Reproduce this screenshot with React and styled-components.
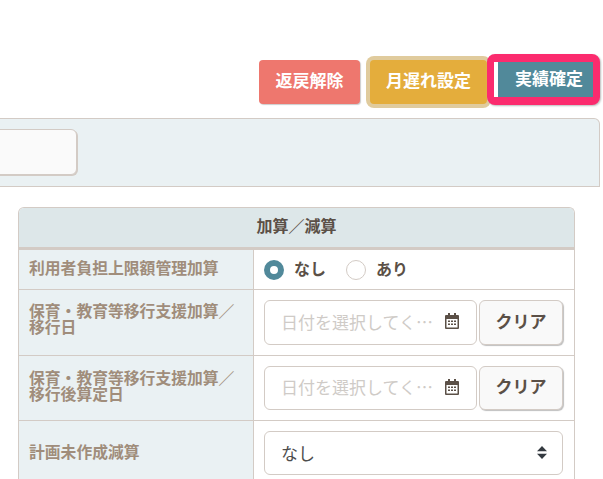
import React from "react";
import styled, { createGlobalStyle } from "styled-components";

const Global = createGlobalStyle`
  html, body { margin: 0; padding: 0; background: #fff; height: 100%; overflow: hidden; }
  body { font-family: "Noto Sans CJK JP", "Noto Sans", sans-serif; color: #5b5047; }
`;

const Page = styled.div`
  width: 603px;
  height: 479px;
  overflow: hidden;
  padding-top: 54px;
  box-sizing: border-box;
`;

const Toolbar = styled.div`
  display: flex;
  justify-content: flex-end;
  align-items: flex-start;
  height: 51px;
  padding-right: 3px;
`;

const ActionButton = styled.div`
  box-sizing: border-box;
  height: 44px;
  width: ${(p) => p.$w}px;
  margin-top: 6px;
  margin-right: ${(p) => p.$mr || 0}px;
  display: flex;
  align-items: center;
  justify-content: center;
  font-size: 17px;
  font-weight: 700;
  color: #fff;
  background: ${(p) => p.$bg};
  border-radius: 4px;
  box-shadow: ${(p) => p.$shadow || "1px 1px 1px #ccc"};
  padding-bottom: 5px;
`;

const ConfirmButton = styled.div`
  box-sizing: border-box;
  width: 113px;
  height: 51px;
  display: flex;
  align-items: center;
  justify-content: center;
  font-size: 17px;
  font-weight: 700;
  color: #fff;
  background: #51899a;
  border: solid #fb2b6e;
  border-width: 8px 7px;
  border-radius: 8px;
  padding-left: 11px;
  padding-bottom: 4px;
  box-shadow: inset 4px 0 0 #fff, 1px 1px 2px #bbb;
`;

const Panel = styled.div`
  margin-top: 13px;
  width: 600px;
  height: 69px;
  box-sizing: border-box;
  background: #eaf1f3;
  border-top: 1px solid #d3cbc5;
  border-bottom: 1px solid #d3cbc5;
  border-right: 1px solid #d3cbc5;
  border-radius: 0 6px 0 0;
  display: flex;
  align-items: flex-start;
`;

const PanelTab = styled.div`
  width: 78px;
  height: 46px;
  box-sizing: border-box;
  margin: 10px 0 0 -1px;
  background: #fafafa;
  border: 1px solid #d3cbc5;
  border-radius: 0 6px 6px 0;
  box-shadow: 1px 1px 0 #d3cbc5;
`;

const Table = styled.div`
  margin: 20px 0 0 18px;
  width: 557px;
  box-sizing: border-box;
  border: 1px solid #d3cbc5;
  border-bottom: none;
  border-radius: 6px 6px 0 0;
  overflow: hidden;
`;

const Header = styled.div`
  box-sizing: border-box;
  height: 42px;
  background: #dde7e9;
  border-bottom: 3px solid #d3cbc5;
  display: flex;
  align-items: center;
  justify-content: center;
  font-size: 16px;
  font-weight: 700;
  color: #5b5047;
  padding-bottom: 6px;
`;

const Row = styled.div`
  display: grid;
  grid-template-columns: 235px 1fr;
  height: ${(p) => p.$h}px;
  box-sizing: border-box;
  border-bottom: ${(p) => (p.$last ? "none" : "1px solid #d3cbc5")};
`;

const Label = styled.div`
  background: #eaf1f3;
  border-right: 1px solid #d3cbc5;
  padding: 0 10px ${(p) => p.$pb || 4}px;
  display: flex;
  align-items: center;
  font-size: 15.8px;
  font-weight: 700;
  line-height: 16px;
  color: #a08d7b;
`;

const Cell = styled.div`
  padding: 0 10px;
  display: flex;
  align-items: center;
`;

const RadioItem = styled.label`
  display: flex;
  align-items: center;
  font-size: 16px;
  font-weight: 700;
  color: #5b5047;
  margin-right: 20px;
  gap: 10px;
`;

const RadioDot = styled.span`
  width: 20px;
  height: 20px;
  box-sizing: border-box;
  border-radius: 50%;
  background: #fff;
  border: ${(p) => (p.$on ? "6px solid #51899a" : "1px solid #d3cbc5")};
`;

const RadioText = styled.span`
  margin-top: -3px;
`;

const DateBox = styled.div`
  box-sizing: border-box;
  width: 213px;
  height: ${(p) => p.$h}px;
  border: 1px solid #d3cbc5;
  border-radius: 6px;
  background: #fff;
  display: flex;
  align-items: center;
  padding: 0 17px 3px 16px;
  justify-content: space-between;
  font-size: 17px;
  color: #cfcbc7;
`;

const ClearButton = styled.div`
  box-sizing: border-box;
  width: 84px;
  height: ${(p) => p.$h}px;
  margin-left: 2px;
  border: 1px solid #d3cbc5;
  border-radius: 6px;
  background: #f9f9f9;
  box-shadow: 1px 1px 1px #bfbfbf;
  display: flex;
  align-items: center;
  justify-content: center;
  font-size: 17px;
  font-weight: 700;
  color: #5b5047;
  padding-bottom: 5px;
`;

const SelectBox = styled.div`
  box-sizing: border-box;
  width: 299px;
  height: 44px;
  border: 1px solid #d3cbc5;
  border-radius: 6px;
  background: #fff;
  display: flex;
  align-items: center;
  justify-content: space-between;
  padding: 0 15px 2px 16px;
  font-size: 17px;
  color: #4d4d4d;
`;

const Calendar = () => (
  <svg width="14" height="16" viewBox="0 0 14 16">
    <path fill="#5b5047" d="M3 0h2v2h4V0h2v2h2a1 1 0 0 1 1 1v12a1 1 0 0 1-1 1H1a1 1 0 0 1-1-1V3a1 1 0 0 1 1-1h2z" />
    <rect x="1.5" y="6" width="11" height="8.5" fill="#fff" />
    <g fill="#5b5047">
      <rect x="3" y="7.5" width="2" height="1.5" />
      <rect x="6" y="7.5" width="2" height="1.5" />
      <rect x="9" y="7.5" width="2" height="1.5" />
      <rect x="3" y="10.5" width="2" height="1.5" />
      <rect x="6" y="10.5" width="2" height="1.5" />
      <rect x="9" y="10.5" width="2" height="1.5" />
    </g>
  </svg>
);

const Sort = () => (
  <svg width="10" height="13" viewBox="0 0 10 13">
    <path fill="#343a40" d="M5 0l5 5.2H0zM5 13L0 7.8h10z" />
  </svg>
);

const DateField = ({ h }) => (
  <>
    <DateBox $h={h}>
      <span>日付を選択してく…</span>
      <Calendar />
    </DateBox>
    <ClearButton $h={h}>クリア</ClearButton>
  </>
);

export default function App() {
  return (
    <Page>
      <Global />
      <Toolbar>
        <ActionButton $w={101} $mr={10} $bg="#ee776e">返戻解除</ActionButton>
        <ActionButton $w={117} $bg="#e4ad3c" $shadow="0 0 0 4px #e0cb9d">月遅れ設定</ActionButton>
        <ConfirmButton>実績確定</ConfirmButton>
      </Toolbar>
      <Panel>
        <PanelTab />
      </Panel>
      <Table>
        <Header>加算／減算</Header>
        <Row $h={40}>
          <Label>利用者負担上限額管理加算</Label>
          <Cell>
            <RadioItem><RadioDot $on /><RadioText>なし</RadioText></RadioItem>
            <RadioItem><RadioDot /><RadioText>あり</RadioText></RadioItem>
          </Cell>
        </Row>
        <Row $h={66}>
          <Label $pb={7}>保育・教育等移行支援加算／<br />移行日</Label>
          <Cell><DateField h={45} /></Cell>
        </Row>
        <Row $h={65}>
          <Label $pb={5}>保育・教育等移行支援加算／<br />移行後算定日</Label>
          <Cell><DateField h={44} /></Cell>
        </Row>
        <Row $h={64} $last>
          <Label $pb={3}>計画未作成減算</Label>
          <Cell>
            <SelectBox>なし<Sort /></SelectBox>
          </Cell>
        </Row>
      </Table>
    </Page>
  );
}
